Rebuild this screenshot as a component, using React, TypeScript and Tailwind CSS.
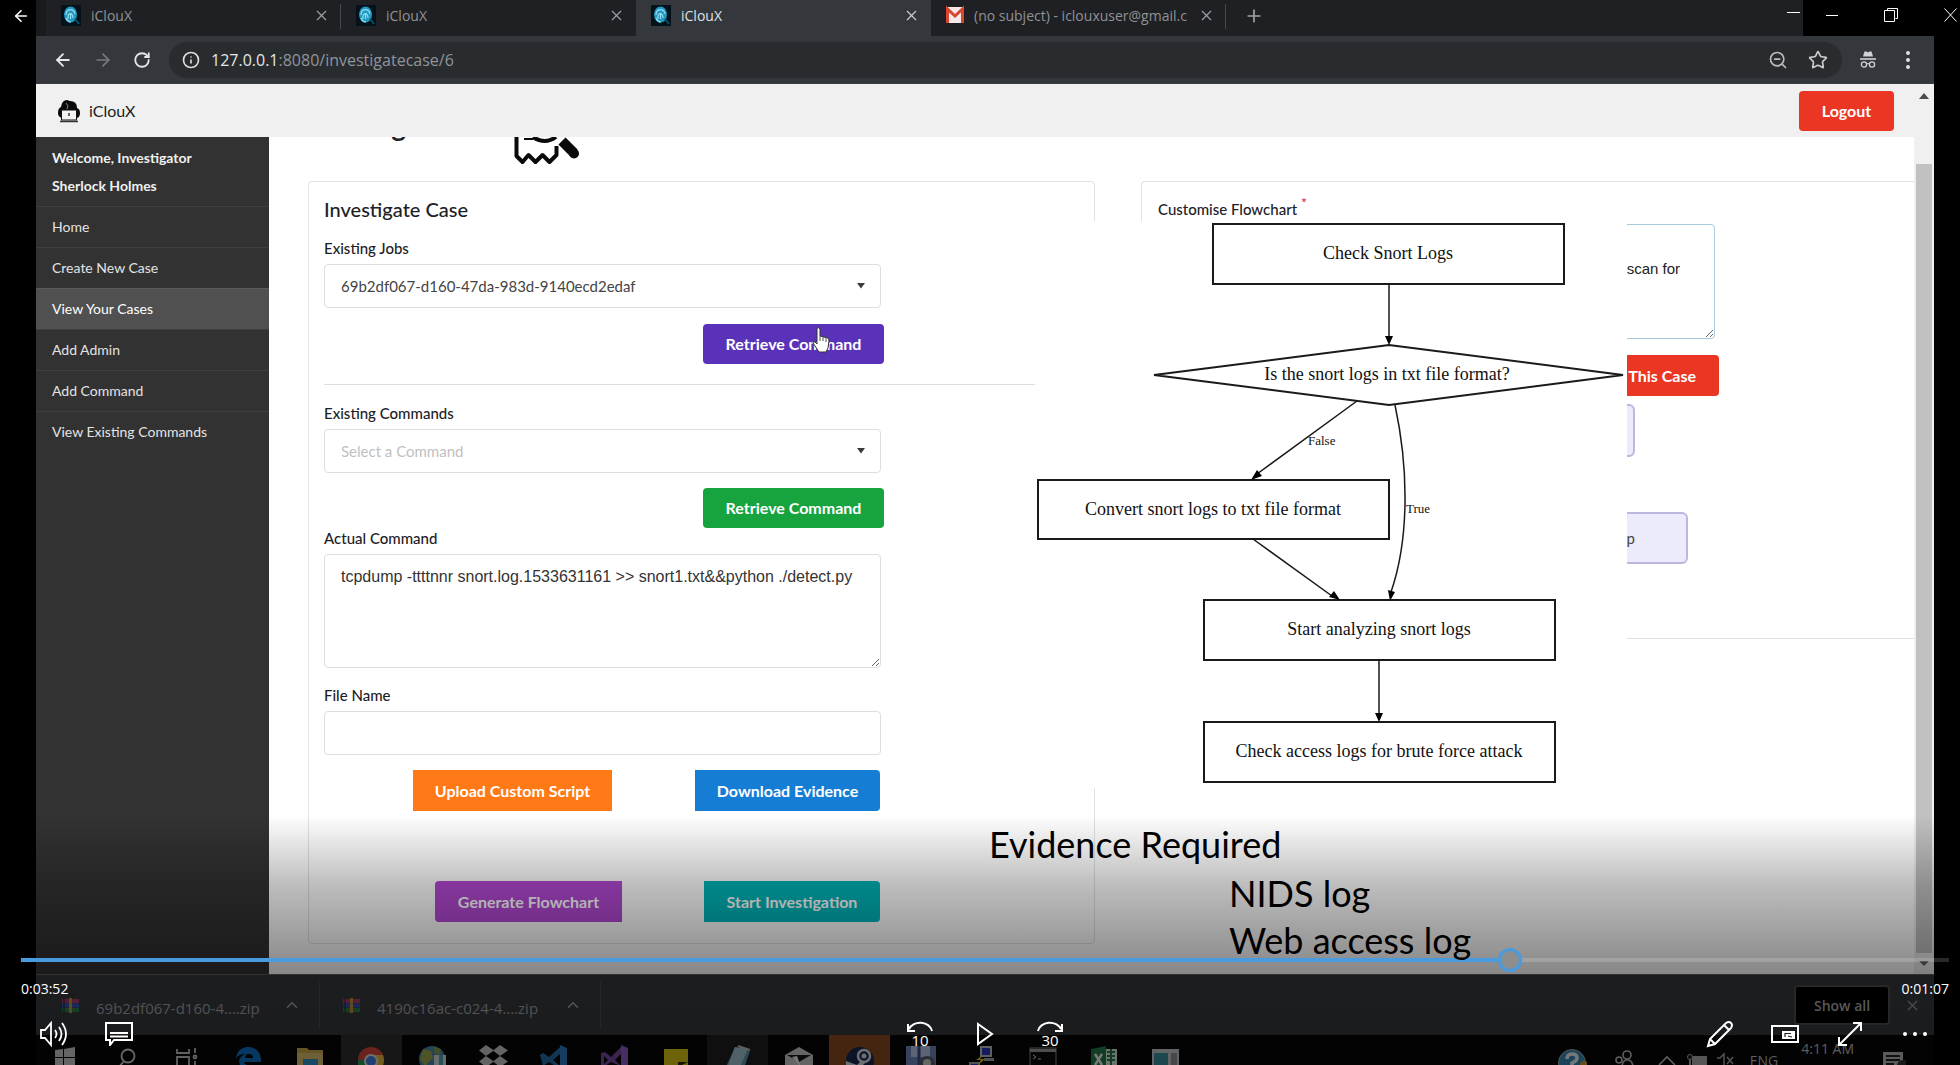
import React from "react";
import { X, Plus, ArrowLeft, ArrowRight, RotateCw, Info, ZoomOut, Star, ChevronUp } from "lucide-react";

const UI = "font-['Open_Sans','Noto_Sans',sans-serif]";

function Fingerprint() {
  return (
    <svg className="h-[21px] w-5 shrink-0" viewBox="0 0 20 21">
      <rect width="20" height="21" fill="#04121c" />
      <ellipse cx="9.500" cy="9.500" rx="6.500" ry="8" fill="#2596be" />
      <path d="M5 10c0-7 8-7 9-1M7 14c-1-7 5-7 5-1M5 13c1 3 3 4 5 4M9.500 8v6" stroke="#8fe0f5" strokeWidth="1.200" fill="none" />
      <path d="M14 14l4 5" stroke="#0d4d66" strokeWidth="2" />
    </svg>
  );
}

function GmailIcon() {
  return (
    <svg className="h-5 w-[18px] shrink-0" viewBox="0 0 18 20">
      <rect x="0" y="2" width="18" height="16" rx="1" fill="#f4e9e7" />
      <path d="M1.500 18V4L9 11l7.500-7v14" stroke="#d9452f" strokeWidth="3" fill="none" />
    </svg>
  );
}

function Tab({ title, active, mail, divider }: { title: string; active?: boolean; mail?: boolean; divider?: boolean }) {
  return (
    <div className={`relative flex h-9 w-[295px] items-center pb-[6px] pl-[15px] pr-[11px] ${active ? "bg-[#34373c] text-[#dfe1e4]" : "text-[#8f9296]"}`}>
      {mail ? <GmailIcon /> : <Fingerprint />}
      <span className="ml-[10px] flex-1 overflow-hidden whitespace-nowrap text-[14px]">{title}</span>
      <button aria-label="Close tab" className="ml-[10px]">
        <X className={`h-[17px] w-[17px] ${active ? "text-[#cfd1d4]" : "text-[#a0a3a7]"}`} strokeWidth={1.6} />
      </button>
      {divider && <span className="absolute right-0 top-1 h-[25px] w-px bg-[#45484c]" />}
    </div>
  );
}

function TabStrip() {
  return (
    <div className="flex h-9 shrink-0 items-stretch bg-[#1f2023]">
      <div className="w-[10px] bg-[#191a1c]" />
      <Tab title="iClouX" divider />
      <div className="rounded-br-lg bg-[#1f2023]">
        <Tab title="iClouX" />
      </div>
      <Tab title="iClouX" active />
      <Tab title="(no subject) - iclouxuser@gmail.c" mail divider />
      <button aria-label="New tab" className="flex w-14 items-center justify-center pb-[5px]">
        <Plus className="h-5 w-5 text-[#a0a3a7]" strokeWidth={2} />
      </button>
    </div>
  );
}

function Incognito() {
  return (
    <svg className="h-[18px] w-4" viewBox="0 0 16 18" fill="none" stroke="#d0d2d5">
      <path d="M4.500 0.500h2l1.500 1 1.500-1h2l1.500 5h-10z" fill="#d0d2d5" stroke="none" />
      <path d="M0 8h16" strokeWidth="1.600" />
      <circle cx="4" cy="13.500" r="2.600" strokeWidth="1.300" />
      <circle cx="12" cy="13.500" r="2.600" strokeWidth="1.300" />
      <path d="M6.500 13q1.500-1 3 0" />
    </svg>
  );
}

function Toolbar() {
  return (
    <div className="flex h-12 shrink-0 items-center border-b border-[#3b3d42] bg-[#34373c] pl-[17px] pr-4">
      <div className="flex items-center gap-5">
        <button aria-label="Back"><ArrowLeft className="h-5 w-5 text-[#e6e7e9]" strokeWidth={2.2} /></button>
        <button aria-label="Forward"><ArrowRight className="h-5 w-5 text-[#787b80]" strokeWidth={2} /></button>
        <button aria-label="Reload"><RotateCw className="h-[18px] w-[18px] text-[#e6e7e9]" strokeWidth={2.4} /></button>
      </div>
      <div className="ml-[18px] flex h-9 flex-1 items-center rounded-full bg-[#292c2f] pl-[13px] pr-[14px]">
        <Info className="h-[18px] w-[18px] text-[#dcdde0]" strokeWidth={2.2} />
        <div role="textbox" aria-label="Address" className={`ml-[11px] flex-1 text-[16px] text-[#8f959b] ${UI}`}>
          <span className="text-[#e4e6e8]">127.0.0.1</span>:8080/investigatecase/6
        </div>
        <button aria-label="Zoom"><ZoomOut className="h-5 w-5 text-[#b9bbbf]" strokeWidth={2} /></button>
        <button aria-label="Bookmark" className="ml-5"><Star className="h-5 w-5 text-[#c9cbce]" strokeWidth={2} /></button>
      </div>
      <div className="ml-[18px]"><Incognito /></div>
      <button aria-label="Menu" className="ml-[22px] flex w-5 flex-col items-center gap-[3px]">
        <span className="h-1 w-1 rounded-full bg-[#e0e1e3]" />
        <span className="h-1 w-1 rounded-full bg-[#e0e1e3]" />
        <span className="h-1 w-1 rounded-full bg-[#e0e1e3]" />
      </button>
    </div>
  );
}

function PageHeader() {
  return (
    <header className="flex h-[53px] shrink-0 items-center bg-[#f0f0f0] pl-[21px] pr-5">
      <svg className="h-6 w-6" viewBox="0 0 24 24">
        <path d="M4 8Q5 1 10 1l3 1q7 0 7 7 3 1 3 5 0 5-4 5H5q-4-1-4-5 0-5 3-6z" fill="#0a0a0a" />
        <path d="M9 4l2 3-1 3" stroke="#888" fill="none" />
        <rect x="4.500" y="11" width="15" height="10" fill="#f4f4f4" stroke="#111" />
        <path d="M12 14v3M3 22.500h18" stroke="#333" strokeWidth="1.500" />
      </svg>
      <span className="ml-2 flex-1 text-[16px] text-[#1c1c1c]">iClouX</span>
      <button className="h-10 w-[95px] rounded bg-[#eb3624] text-[16px] font-bold text-white">Logout</button>
    </header>
  );
}

const navItems = ["Home", "Create New Case", "View Your Cases", "Add Admin", "Add Command", "View Existing Commands"];

function Sidebar() {
  return (
    <nav className="w-[233px] shrink-0 bg-[#323232] text-[14px] text-[#e3e3e3]">
      <div className="h-[69px] pl-4 pt-[7px] font-bold leading-7 text-[#f0f0f0]">
        <div>Welcome, Investigator</div>
        <div>Sherlock Holmes</div>
      </div>
      {navItems.map((item) => (
        <a
          key={item}
          href="#"
          className={`flex h-[41px] items-center border-t pb-[2px] pl-4 ${item === "View Your Cases" ? "border-[#5a5a5a] bg-[#505050] text-white" : "border-[#3e3e3e]"}`}
        >
          {item}
        </a>
      ))}
    </nav>
  );
}

const fieldLabel = "mb-[6px] block text-[15px] font-medium leading-5";

function Select({ id, label, value, muted }: { id: string; label: string; value: string; muted?: boolean }) {
  return (
    <div>
      <label htmlFor={id} className={fieldLabel}>{label}</label>
      <div className="relative">
        <select
          id={id}
          defaultValue={value}
          className={`h-11 w-full appearance-none rounded border border-[#dededf] bg-white pl-4 text-[15px] ${muted ? "text-[#bfbfbf]" : "text-[#444]"}`}
        >
          <option>{value}</option>
        </select>
        <svg className="pointer-events-none absolute right-4 top-[19px] h-[6px] w-2" viewBox="0 0 8 6">
          <path d="M0 0h8L4 5.500z" fill="#3a3a3a" />
        </svg>
      </div>
    </div>
  );
}

const actionButton = "text-[16px] font-bold text-white";

function InvestigatePanel() {
  return (
    <section className="h-[763px] w-[787px] shrink-0 rounded border border-[#e2e2e3] bg-white pl-[15px] pr-4 pt-[15px] text-[#1d2126]">
      <h2 className="text-[20px] font-medium leading-6">Investigate Case</h2>
      <div className="mt-[17px] w-[557px]">
        <Select id="jobs" label="Existing Jobs" value="69b2df067-d160-47da-983d-9140ecd2edaf" />
        <div className="-mr-[3px] mt-4 flex justify-end">
          <button className={`${actionButton} h-10 w-[181px] rounded bg-[#5a32ba]`}>Retrieve Command</button>
        </div>
      </div>
      <hr className="mb-[18px] mt-5 border-[#dedede]" />
      <div className="w-[557px]">
        <Select id="commands" label="Existing Commands" value="Select a Command" muted />
        <div className="-mr-[3px] mt-[15px] flex justify-end">
          <button className={`${actionButton} h-10 w-[181px] rounded bg-[#17a43f]`}>Retrieve Command</button>
        </div>
        <label htmlFor="actual" className={fieldLabel}>Actual Command</label>
        <textarea
          id="actual"
          defaultValue="tcpdump -ttttnnr snort.log.1533631161 >> snort1.txt&&python ./detect.py"
          className="block h-[114px] w-full rounded border border-[#dededf] px-4 py-3 font-['Liberation_Sans',sans-serif] text-[16px] leading-5 text-[#333]"
        />
        <label htmlFor="filename" className={`mt-[17px] ${fieldLabel}`}>File Name</label>
        <input id="filename" className="block h-11 w-full rounded border border-[#dededf] px-4" />
        <div className="mr-px mt-[15px] flex justify-end gap-[83px]">
          <button className={`${actionButton} h-[41px] w-[199px] bg-[#ff7a16]`}>Upload Custom Script</button>
          <button className={`${actionButton} h-[41px] w-[185px] rounded-r bg-[#167dd5]`}>Download Evidence</button>
        </div>
        <div className="mr-px mt-[70px] flex justify-end gap-[82px]">
          <button className={`${actionButton} h-[41px] w-[187px] rounded-l bg-[#b248d2]`}>Generate Flowchart</button>
          <button className={`${actionButton} h-[41px] w-[176px] rounded-r bg-[#00b5b9]`}>Start Investigation</button>
        </div>
      </div>
    </section>
  );
}

function CustomisePanel() {
  return (
    <section className="h-[458px] flex-1 rounded-tl border-b border-l border-t border-[#e2e2e3] bg-white pl-4 pt-[17px] text-[#1d2126]">
      <label htmlFor="flow" className="mb-[5px] block text-[15px] font-medium leading-5">
        Customise Flowchart <sup className="text-[14px] text-[#db2828]">*</sup>
      </label>
      <textarea
        id="flow"
        defaultValue={"\nscan for"}
        className="block h-[115px] w-[557px] rounded border border-[#a9c9dd] px-[34px] py-[14px] text-right font-['Liberation_Sans',sans-serif] text-[15px] leading-5 text-[#222]"
      />
      <div className="flex w-[561px] flex-col">
        <button className="mt-4 h-[41px] w-40 self-end rounded bg-[#eb3624] pr-[23px] text-right text-[16px] font-bold text-white">This Case</button>
        <div className="mt-2 h-[53px] w-[477px] rounded-md border-2 border-[#bdb6e0] bg-[#ecebfb]" />
        <div className="mt-[55px] flex h-[52px] w-[530px] items-center justify-end rounded-md border-2 border-[#bdb6e0] bg-[#ecebfb] pr-[51px] text-[15px] text-[#444]">p</div>
      </div>
    </section>
  );
}

function TitleRow() {
  return (
    <div className="flex h-11 items-start overflow-hidden">
      <h1 className="-mt-7 w-[206px] text-[28px] font-bold leading-8 text-[#1d2126]">Investigate</h1>
      <svg className="h-[30px] w-[68px]" viewBox="0 0 68 30" fill="none" stroke="#0a0a0a" strokeWidth="4">
        <path d="M2.500 -4V19l6 6 6-7 7 7 7-7 7 7 7-7V9" strokeLinejoin="round" />
        <path d="M10 2h9" strokeWidth="2" />
        <path d="M19 0q12 8 23 0" />
        <path d="M48 4L60 16" strokeWidth="10" strokeLinejoin="round" />
        <circle cx="60" cy="16.500" r="5" fill="#0a0a0a" stroke="none" />
      </svg>
    </div>
  );
}

function PageScrollbar() {
  return (
    <div className="flex w-5 shrink-0 flex-col items-center bg-[#f0f0f0] pt-[9px]">
      <svg className="h-[6px] w-[10px]" viewBox="0 0 10 6"><path d="M0 6L5 0l5 6z" fill="#4c4c4c" /></svg>
      <div className="mt-[65px] w-4 flex-1 bg-[#c1c1c1]" />
      <svg className="mb-2 mt-2 h-[5px] w-[10px]" viewBox="0 0 10 5"><path d="M0 0l5 5 5-5z" fill="#666" /></svg>
    </div>
  );
}

function Archive() {
  return (
    <svg className="h-[15px] w-[19px]" viewBox="0 0 19 15">
      <rect x="1" y="1" width="17" height="4" fill="#a23b66" />
      <rect x="1" y="5.500" width="17" height="4" fill="#2f52b4" />
      <rect x="1" y="10" width="17" height="4" fill="#2d7a45" />
      <path d="M8 0h3v15H8z" fill="#b98a3c" />
      <path d="M3 1v13" stroke="#222" />
    </svg>
  );
}

function Download({ name }: { name: string }) {
  return (
    <div className="flex w-[259px] shrink-0 items-center border-r border-[#4a4b4d]">
      <Archive />
      <span className="ml-4 pt-[6px] text-[15px] text-[#9b9da0]">{name}</span>
      <button aria-label="Download options" className="ml-auto mr-[18px]">
        <ChevronUp className="h-[18px] w-[18px] text-[#a0a2a5]" strokeWidth={2} />
      </button>
    </div>
  );
}

function DownloadBar() {
  return (
    <div className="flex h-[61px] shrink-0 items-center border-t border-[#5b5b5b] bg-[#35373b] pr-[13px]">
      <div className="ml-[25px] flex h-[46px] flex-1 gap-[22px]">
        <Download name="69b2df067-d160-4....zip" />
        <Download name="4190c16ac-c024-4....zip" />
      </div>
      <button className="h-10 w-24 rounded border-2 border-[#4a4b4e] bg-black text-[14px] font-semibold text-[#a8a8a8]">Show all</button>
      <button aria-label="Close downloads" className="ml-[14px]"><X className="h-[17px] w-[17px] text-[#8b8d90]" strokeWidth={2} /></button>
    </div>
  );
}

const icon = "h-[30px] w-8";
const taskIcons: { el: React.ReactNode; bg?: string }[] = [
  { el: <svg className={icon} viewBox="0 0 32 30"><path d="M4 15l8-1v8H4zM13 14l11-2v10H13zM4 23h8v8l-8-1zM13 23h11v9l-11-1z" fill="#c9c9c9" /></svg> },
  { el: <svg className={icon} viewBox="0 0 32 30" fill="none" stroke="#d0d0d0" strokeWidth="1.800"><circle cx="16" cy="21" r="6.500" /><path d="M12 26l-5 6" /></svg> },
  { el: <svg className={icon} viewBox="0 0 32 30" fill="none" stroke="#c0c0c0" strokeWidth="1.800"><path d="M4 14v4h12v-4M4 34V22h12v10M22 13v5M22 26v6" /><circle cx="22" cy="22" r="1.500" /></svg> },
  { el: <svg className={icon} viewBox="0 0 32 30"><path d="M2 24C3 14 9 12 15 12q11 1 12 12v3H10q1 4 8 4v5Q6 36 5 26q1-5 6-7-7 0-9 5zM11 23h8q0-4-4-4t-4 4z" fill="#0d6fc0" fillRule="evenodd" /></svg> },
  { el: <svg className={icon} viewBox="0 0 32 30"><path d="M2 13h10l2 2h14v17H2z" fill="#c9a64a" /><path d="M2 18h26v14H2z" fill="#dcc06c" /><path d="M8 24h15v8H8z" fill="#3093c7" /></svg> },
  { el: <svg className={icon} viewBox="0 0 32 30"><circle cx="15" cy="25" r="13" fill="#d8463a" /><path d="M2 25q-1 8 6 12l7-12z" fill="#249a51" /><path d="M15 20h12q3 9-4 16l-8-6z" fill="#e4b93c" /><circle cx="15" cy="26" r="6" fill="#3f7fe0" stroke="#ddd" strokeWidth="2" /></svg>, bg: "bg-[#2d2d2d]" },
  { el: <svg className={icon} viewBox="0 0 32 30"><circle cx="15" cy="24" r="13" fill="#4788a8" /><path d="M6 14l8 2 2 7-8 8-5-7z" fill="#9aa84c" /><path d="M17 12l7 2-1 6-6-2z" fill="#7e9e58" /><path d="M17 20h12v11H17z" fill="#d3d8dc" /><path d="M22 20h4v11h-4z" fill="#4ba3b8" /></svg> },
  { el: <svg className={icon} viewBox="0 0 32 30" fill="#c6c6c6"><path d="M8 10l8 5.500-8 5.500-7-5.500zM22 10l8 5.500-8 5.500-7-5.500zM8 21l8 5.500-8 5.500-7-5.500zM22 21l8 5.500-8 5.500-7-5.500z" /></svg> },
  { el: <svg className={icon} viewBox="0 0 32 30"><path d="M21 10l7 3v19h-7z" fill="#2b79bd" /><path d="M1 20l3-2 6 4 11-10v7l-7 6 7 6v3L10 27l-6 4z" fill="#246aa8" /></svg> },
  { el: <svg className={icon} viewBox="0 0 32 30"><path d="M21 10l7 3v19h-7z" fill="#8a5cc0" /><path d="M1 18l4-1 6 5 10-10v7l-6 6 6 6-10-4-6 4-4-1zM4 21v8l4-4z" fill="#75499f" fillRule="evenodd" /></svg> },
  { el: <svg className={icon} viewBox="0 0 32 30"><path d="M3 14h24v18H3z" fill="#d8c613" /><path d="M17 32V27h10z" fill="#2d2a05" /></svg> },
  { el: <svg className={icon} viewBox="0 0 32 30"><path d="M13 12l15 4-7 20H2z" fill="#5894ad" /><path d="M13 12l13 2-8 18-12-1z" fill="#9fc3cf" /><path d="M16 11l12 4" stroke="#bbb" strokeWidth="2" /></svg>, bg: "bg-[#1d1e1f]" },
  { el: <svg className={icon} viewBox="0 0 32 30"><path d="M2 20l14-8 14 8v14H2z" fill="#c9c9c9" /><path d="M4 20h24l-12 7z" fill="#151515" /><path d="M14 21l4 11-9-10z" fill="#eee" /></svg> },
  { el: <svg className={icon} viewBox="0 0 32 30"><circle cx="16" cy="26" r="14" fill="#16294e" /><circle cx="20" cy="21" r="6" fill="none" stroke="#d7dce6" strokeWidth="2.500" /><circle cx="20" cy="21" r="2.500" fill="#d7dce6" /><path d="M2 26l11 4 4-4 4 2-8 8H2z" fill="#d7dce6" /></svg>, bg: "bg-[#8a4a20]" },
  { el: <svg className={icon} viewBox="0 0 32 30"><path d="M1 11h30v24H1z" fill="#6e85b9" /><path d="M6 11h19v11H6z" fill="#b6c8e8" /><path d="M14 11v24" stroke="#3a4c84" strokeWidth="3" /><circle cx="22" cy="29" r="8" fill="#555c66" /><circle cx="22" cy="28" r="4" fill="#c9ccd2" /></svg> },
  { el: <svg className={icon} viewBox="0 0 32 30"><path d="M14 11h12v11H14z" fill="#b8bcc4" /><path d="M16 13h8v7h-8z" fill="#2b35b8" /><path d="M18 23h10v3H18zM3 27h11v8H3z" fill="#9da0a6" /><path d="M5 29h7v4H5z" fill="#2b35b8" /><path d="M17 20l-7 5h5l-4 6 8-7h-5z" fill="#e3c51d" /></svg> },
  { el: <svg className={icon} viewBox="0 0 32 30"><path d="M3 13h26v22H3z" fill="#0a0a0a" stroke="#8d8d8d" /><path d="M3 14h26v3H3z" fill="#9a9a9a" /><path d="M6 20l3 2-3 2M11 24h3" stroke="#ccc" fill="none" /></svg> },
  { el: <svg className={icon} viewBox="0 0 32 30"><path d="M17 14h12v20H17z" fill="#d9e6dd" /><path d="M19 17h8M19 21h8M19 25h8M23 14v16" stroke="#1f7a45" strokeWidth="2" /><path d="M3 14l15-3v26l-15-3z" fill="#1f7a45" /><path d="M7 19l7 11M14 19L7 30" stroke="#f0f0f0" strokeWidth="2.500" /></svg> },
  { el: <svg className={icon} viewBox="0 0 32 30"><path d="M3 14h27v20H3z" fill="#c3c9cd" /><path d="M5 18h14v16H5z" fill="#3b8f9e" /><path d="M22 18h6v16h-6z" fill="#8c9195" /></svg> },
];

function TaskBar() {
  return (
    <div className="flex h-[30px] shrink-0 overflow-hidden bg-[#060606]">
      <div className="flex w-[1180px] shrink-0 justify-start">
        {taskIcons.map((t, i) => (
          <div key={i} className={`flex w-[61px] shrink-0 items-center justify-center ${t.bg ?? ""}`}>{t.el}</div>
        ))}
      </div>
      <div className={`ml-auto flex shrink-0 items-start pr-7 text-[14px] text-[#b8b8b8] ${UI}`}>
        <svg className="h-[30px] w-[30px]" viewBox="0 0 30 30"><circle cx="15" cy="28" r="13.500" fill="#3187b5" stroke="#aaa" /><path d="M10 24q0-5 5-5t5 4q0 3-5 5v4" stroke="#eee" strokeWidth="3.500" fill="none" /><circle cx="27" cy="30" r="4" fill="#d39b2c" /></svg>
        <svg className="ml-[27px] h-[30px] w-5" viewBox="0 0 20 30" fill="none" stroke="#bbb" strokeWidth="1.600"><circle cx="13" cy="20" r="4" /><circle cx="5" cy="25" r="3" /><path d="M8 31q1-6 5-6 5 0 6 6" /></svg>
        <svg className="ml-[23px] h-[30px] w-5" viewBox="0 0 20 30" fill="none" stroke="#bbb" strokeWidth="1.600"><path d="M2 30l8-8 8 8" /></svg>
        <svg className="ml-[10px] h-[30px] w-5" viewBox="0 0 20 30"><path d="M5 21h15v9H5z" fill="#aaa" /><circle cx="3" cy="22" r="2.500" fill="#111" stroke="#aaa" /><path d="M3 24v6" stroke="#aaa" strokeWidth="2" /></svg>
        <svg className="ml-[9px] h-[30px] w-[18px]" viewBox="0 0 18 30" fill="none" stroke="#aaa" strokeWidth="1.400"><path d="M1 23h3l4-4v12M11 22l6 7M17 22l-6 7" /></svg>
        <span className="ml-[16px] mt-4 leading-5">ENG</span>
        <span className="ml-[23px] mt-1 leading-5">4:11 AM</span>
        <svg className="ml-[28px] h-[30px] w-6" viewBox="0 0 24 30"><path d="M1 17h20v15H1z" fill="#b5b5b5" /><path d="M4 21h14M4 25h14M4 29h8" stroke="#222" strokeWidth="1.800" /><circle cx="21" cy="31" r="6" fill="#333" /></svg>
      </div>
    </div>
  );
}

function Flowchart() {
  return (
    <svg className="absolute left-[1035px] top-[221px] h-[567px] w-[592px] bg-white" viewBox="1035 221 592 567">
      <g fill="#fff" stroke="#1a1a1a" strokeWidth="2">
        <rect x="1213" y="224" width="351" height="60" />
        <path d="M1154 375L1389 345 1623 375 1389 405z" />
        <rect x="1038" y="480" width="351" height="59" />
        <rect x="1204" y="600" width="351" height="60" />
        <rect x="1204" y="722" width="351" height="60" />
      </g>
      <g fill="none" stroke="#1a1a1a" strokeWidth="1.500">
        <path d="M1389 284V338M1357 401L1257 474M1395 405C1409 470 1409 540 1391 592M1253 539L1332 596M1379 660V714" />
      </g>
      <g fill="#000">
        <path d="M1385 336h8l-4 9zM1251 480l6-10 5 6zM1388 590l7 2-5 9zM1340 600l-11-3 5-6zM1375 713h8l-4 9z" />
      </g>
      <g fill="#111" fontFamily="'Liberation Serif', serif" fontSize="18" textAnchor="middle">
        <text x="1388" y="259">Check Snort Logs</text>
        <text x="1387" y="380">Is the snort logs in txt file format?</text>
        <text x="1213" y="515">Convert snort logs to txt file format</text>
        <text x="1379" y="635">Start analyzing snort logs</text>
        <text x="1379" y="757">Check access logs for brute force attack</text>
      </g>
      <g fill="#111" fontFamily="'Liberation Serif', serif" fontSize="13">
        <text x="1308" y="445">False</text>
        <text x="1406" y="513">True</text>
      </g>
    </svg>
  );
}

function EvidenceNotes() {
  return (
    <div className="pointer-events-none absolute left-[989px] top-[820px] text-[36px] text-black">
      <div className="leading-[48px]">Evidence Required</div>
      <div className="ml-[240px] mt-[2px] leading-[47px]">
        <div>NIDS log</div>
        <div>Web access log</div>
      </div>
    </div>
  );
}

function HandCursor() {
  return (
    <svg className="pointer-events-none absolute left-[812px] top-[327px] h-[26px] w-[18px]" viewBox="0 0 18 26">
      <path d="M5 1q2-1 3 1v7l8 2q1 1 1 3l-1 7-2 4H7l-6-9q0-2 2-1l2 2z" fill="#fff" stroke="#333" />
      <path d="M8 9v5M11 10v4M14 11v4" stroke="#555" />
    </svg>
  );
}

function WindowControls() {
  return (
    <>
      <button aria-label="Go back" className="absolute left-3 top-1 flex h-6 w-[18px] items-center">
        <ArrowLeft className="h-[18px] w-[18px] text-white" strokeWidth={2.2} />
      </button>
      <span className="absolute right-[160px] top-3 h-px w-[13px] bg-white" />
      <div className="absolute right-0 top-0 flex h-9 w-[157px] items-center justify-between bg-black pb-[6px] pl-[23px] pr-[3px]">
        <button aria-label="Minimize" className="h-px w-3 bg-white" />
        <button aria-label="Restore">
          <svg className="h-[14px] w-[14px]" viewBox="0 0 14 14" fill="none" stroke="#fff"><path d="M3.500 2.500v-2h10v10h-2M0.500 2.500h10v11h-10z" /></svg>
        </button>
        <button aria-label="Close">
          <svg className="h-[14px] w-[13px]" viewBox="0 0 13 14" fill="none" stroke="#fff"><path d="M0.500 0.500l12 13M12.500 0.500l-12 13" /></svg>
        </button>
      </div>
    </>
  );
}

const ctl = "flex h-8 w-[65px] items-center justify-center";
const glyph = { fill: "none", stroke: "#fff", strokeWidth: 2 };

function PlayerControls() {
  return (
    <div className="absolute inset-x-0 bottom-0 flex flex-col pb-[15px] pl-[21px] pr-[11px] text-white">
      <input
        type="range"
        aria-label="Seek"
        min={0}
        max={299}
        defaultValue={232}
        className="h-6 w-full appearance-none bg-transparent [&::-webkit-slider-runnable-track]:h-1 [&::-webkit-slider-runnable-track]:bg-[linear-gradient(to_right,#4a9ae0_76.6%,rgba(255,255,255,0.16)_78%)] [&::-webkit-slider-thumb]:-mt-[10px] [&::-webkit-slider-thumb]:h-6 [&::-webkit-slider-thumb]:w-6 [&::-webkit-slider-thumb]:appearance-none [&::-webkit-slider-thumb]:rounded-full [&::-webkit-slider-thumb]:border-[3px] [&::-webkit-slider-thumb]:border-[#4a9ae0] [&::-webkit-slider-thumb]:bg-[#8e8e8e]"
      />
      <div className={`mt-[6px] flex h-5 items-center justify-between text-[14px] ${UI}`}>
        <span>0:03:52</span>
        <span>0:01:07</span>
      </div>
      <div className="mt-5 grid grid-cols-[1fr_auto_1fr]">
        <div className="flex">
          <button aria-label="Volume" className={ctl}>
            <svg className="h-[26px] w-7" viewBox="0 0 28 26" {...glyph}><path d="M1 9h4l6-7v22l-6-7H1zM15 9q3 4 0 8M19 6q5 7 0 14M22 2q8 11 0 22" strokeWidth="1.800" /></svg>
          </button>
          <button aria-label="Captions" className={ctl}>
            <svg className="h-6 w-7" viewBox="0 0 28 24" {...glyph}><path d="M1 1h26v17H9l-4 5v-5H1zM5 11h18M5 14.500h18" /></svg>
          </button>
        </div>
        <div className="flex">
          <button aria-label="Back 10 seconds" className={ctl}>
            <svg className="h-[27px] w-7" viewBox="0 0 28 27" {...glyph}><path d="M26 10A12 10 0 0 0 3 8M2 3v7h7" /><text x="14" y="25" fill="#fff" stroke="none" fontSize="15" fontFamily="Open Sans, sans-serif" textAnchor="middle">10</text></svg>
          </button>
          <button aria-label="Play" className={ctl}>
            <svg className="h-6 w-[18px]" viewBox="0 0 18 24" {...glyph}><path d="M2 2l14 10L2 22z" /></svg>
          </button>
          <button aria-label="Forward 30 seconds" className={ctl}>
            <svg className="h-[27px] w-7" viewBox="0 0 28 27" {...glyph}><path d="M2 10A12 10 0 0 1 25 8M26 3v7h-7" /><text x="14" y="25" fill="#fff" stroke="none" fontSize="15" fontFamily="Open Sans, sans-serif" textAnchor="middle">30</text></svg>
          </button>
        </div>
        <div className="flex justify-end pr-[2px]">
          <button aria-label="Draw" className={ctl}>
            <svg className="h-7 w-7" viewBox="0 0 28 28" {...glyph}><path d="M2 26l2-7L20 3q3-2 5 0t0 5L9 24zM18 5l5 5M4 19l5 5" /></svg>
          </button>
          <button aria-label="Mini view" className={ctl}>
            <svg className="h-[18px] w-7" viewBox="0 0 28 18" {...glyph}><path d="M1 1h26v16H1z" /><path d="M11 6h13v8H11z" fill="#fff" stroke="none" /><path d="M14 12V8.500h6M17 11l4 1" stroke="#222" strokeWidth="1.200" /></svg>
          </button>
          <button aria-label="Full screen" className={ctl}>
            <svg className="h-[26px] w-[26px]" viewBox="0 0 26 26" {...glyph}><path d="M2 24L24 2M16 2h8v8M2 16v8h8" /></svg>
          </button>
          <button aria-label="More" className={`${ctl} gap-[6px]`}>
            <span className="h-1 w-1 rounded-full bg-white" />
            <span className="h-1 w-1 rounded-full bg-white" />
            <span className="h-1 w-1 rounded-full bg-white" />
          </button>
        </div>
      </div>
    </div>
  );
}

export default function App() {
  return (
    <div className="relative h-screen overflow-hidden bg-black font-['Lato',sans-serif]">
      <div className="ml-9 mr-[26px] flex h-full flex-col">
        <div className={UI}><TabStrip /></div>
        <Toolbar />
        <div className="flex min-h-0 flex-1">
          <div className="flex min-w-0 flex-1 flex-col">
            <PageHeader />
            <div className="flex min-h-0 flex-1">
              <Sidebar />
              <main className="min-w-0 flex-1 overflow-hidden bg-white pl-[39px]">
                <TitleRow />
                <div className="flex gap-[46px]">
                  <InvestigatePanel />
                  <CustomisePanel />
                </div>
              </main>
            </div>
          </div>
          <PageScrollbar />
        </div>
        <div className={UI}><DownloadBar /></div>
        <TaskBar />
      </div>
      <Flowchart />
      <HandCursor />
      <div className="pointer-events-none absolute inset-x-0 bottom-0 h-[250px] bg-[linear-gradient(to_bottom,transparent,rgba(0,0,0,0.26)_28%,rgba(0,0,0,0.38)_48%,rgba(0,0,0,0.47)_64%,rgba(0,0,0,0.5)_100%)]" />
      <WindowControls />
      <PlayerControls />
      <EvidenceNotes />
    </div>
  );
}
